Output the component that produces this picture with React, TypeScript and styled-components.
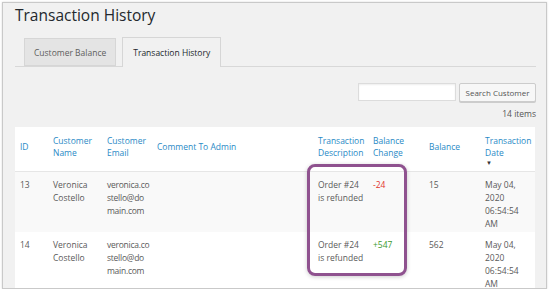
import styled, { createGlobalStyle } from 'styled-components';

const GlobalStyle = createGlobalStyle`
  body {
    margin: 0;
    background: #ffffff;
    font-family: "Open Sans", "Noto Sans", sans-serif;
  }
`;

interface Row {
  id: number;
  name: string;
  email: string;
  comment: string;
  description: string;
  change: number;
  balance: number;
  date: string[];
}

const rows: Row[] = [
  {
    id: 13,
    name: 'Veronica Costello',
    email: 'veronica.costello@domain.com',
    comment: '',
    description: 'Order #24 is refunded',
    change: -24,
    balance: 15,
    date: ['May 04,', '2020', '06:54:54', 'AM'],
  },
  {
    id: 14,
    name: 'Veronica Costello',
    email: 'veronica.costello@domain.com',
    comment: '',
    description: 'Order #24 is refunded',
    change: 547,
    balance: 562,
    date: ['May 04,', '2020', '06:54:54', 'AM'],
  },
];

// Style Components
const Frame = styled.div`
  position: relative;
  margin: 2px 3px 0 2px;
  height: 287px;
  box-sizing: border-box;
  border: 1px solid #c9c9c9;
  box-shadow: 0 0 2px rgba(0, 0, 0, 0.15);
  background: #f1f1f1;
  padding: 2px 10px 0 12px;
  overflow: hidden;
`;
const Title = styled.h1`
  margin: 0;
  font-size: 15.5px;
  line-height: 20px;
  font-weight: 400;
  color: #23282d;
`;
const TabBar = styled.div`
  display: flex;
  gap: 6px;
  margin-top: 13px;
  padding-left: 9px;
  height: 28px;
  border-bottom: 1px solid #d8d8d8;
`;
const Tab = styled.div<{ active?: boolean }>`
  display: flex;
  align-items: center;
  box-sizing: border-box;
  height: ${(p) => (p.active ? '30px' : '28px')};
  padding: 0 ${(p) => (p.active ? '10px' : '9px')};
  font-size: 8.5px;
  color: ${(p) => (p.active ? '#23282d' : '#5e5e5e')};
  background: ${(p) => (p.active ? '#f1f1f1' : '#e4e4e4')};
  border: 1px solid #d6d6d6;
  border-bottom: ${(p) => (p.active ? 'none' : '1px solid #d6d6d6')};
  margin-top: ${(p) => (p.active ? '-1px' : '0')};
`;
const Toolbar = styled.div`
  display: flex;
  justify-content: flex-end;
  gap: 3px;
  margin-top: 16px;
`;
const SearchInput = styled.div`
  width: 98px;
  height: 18px;
  box-sizing: border-box;
  background: #ffffff;
  border: 1px solid #dcdcdc;
  box-shadow: inset 0 1px 2px rgba(0, 0, 0, 0.07);
`;
const SearchButton = styled.div`
  display: flex;
  align-items: center;
  justify-content: center;
  width: 77px;
  height: 19px;
  box-sizing: border-box;
  font-size: 8px;
  color: #555;
  background: #f7f7f7;
  border: 1px solid #cccccc;
  border-radius: 2px;
  box-shadow: 0 1px 0 #cccccc;
`;
const Count = styled.div`
  text-align: right;
  font-size: 8.5px;
  line-height: 12px;
  color: #555;
  margin-top: 6px;
`;
const Table = styled.table`
  margin-top: 7px;
  width: 520px;
  table-layout: fixed;
  border-collapse: collapse;
  background: #ffffff;
  font-size: 8.5px;
  line-height: 13px;
`;
const HeadCell = styled.th`
  position: relative;
  height: 44px;
  box-sizing: border-box;
  padding: 0 5px 4px;
  text-align: left;
  vertical-align: middle;
  font-weight: 400;
  line-height: 12px;
  color: #2a8ac6;
  border-bottom: 1px solid #e6e6e6;
`;
const SortArrow = styled.span`
  position: absolute;
  left: 6px;
  bottom: 5px;
  font-size: 6px;
  line-height: 6px;
  color: #333;
`;
const BodyRow = styled.tr<{ striped?: boolean }>`
  background: ${(p) => (p.striped ? '#f9f9f9' : '#ffffff')};
`;
const Cell = styled.td<{ tone?: 'neg' | 'pos'; wrap?: 'all' | 'tight' }>`
  height: 60px;
  box-sizing: border-box;
  padding: 6px ${(p) => (p.wrap ? (p.wrap === 'all' ? '1px' : '2px') : '5px')} 2px 5px;
  vertical-align: top;
  word-break: ${(p) => (p.wrap === 'all' ? 'break-all' : 'normal')};
  letter-spacing: ${(p) => (p.wrap === 'all' ? '-0.25px' : '0')};
  color: ${(p) =>
    p.tone === 'neg' ? '#e2342d' : p.tone === 'pos' ? '#3b9a2f' : '#5a5a5a'};
`;
const Highlight = styled.div`
  position: absolute;
  left: 304px;
  top: 161px;
  width: 100px;
  height: 112px;
  box-sizing: border-box;
  border: 3px solid #8f528f;
  border-radius: 8px;
  box-shadow: 0 1px 4px rgba(0, 0, 0, 0.2);
  pointer-events: none;
`;

const columns = [33, 54, 50, 161, 55, 56, 56, 55];

function App() {
  return (
    <>
      <GlobalStyle />
      <Frame>
        <Title>Transaction History</Title>
        <TabBar>
          <Tab>Customer Balance</Tab>
          <Tab active>Transaction History</Tab>
        </TabBar>
        <Toolbar>
          <SearchInput />
          <SearchButton>Search Customer</SearchButton>
        </Toolbar>
        <Count>14 items</Count>
        <Table>
          <colgroup>
            {columns.map((w, i) => (
              <col key={i} style={{ width: w }} />
            ))}
          </colgroup>
          <thead>
            <tr>
              <HeadCell>ID</HeadCell>
              <HeadCell>Customer Name</HeadCell>
              <HeadCell>Customer Email</HeadCell>
              <HeadCell>Comment To Admin</HeadCell>
              <HeadCell>Transaction Description</HeadCell>
              <HeadCell>Balance Change</HeadCell>
              <HeadCell>Balance</HeadCell>
              <HeadCell>
                Transaction Date
                <SortArrow>▼</SortArrow>
              </HeadCell>
            </tr>
          </thead>
          <tbody>
            {rows.map((r, i) => (
              <BodyRow key={r.id} striped={i % 2 === 0}>
                <Cell>{r.id}</Cell>
                <Cell>{r.name}</Cell>
                <Cell wrap="all">{r.email}</Cell>
                <Cell>{r.comment}</Cell>
                <Cell wrap="tight">{r.description}</Cell>
                <Cell tone={r.change < 0 ? 'neg' : 'pos'}>
                  {r.change < 0 ? `-${Math.abs(r.change)}` : `+${r.change}`}
                </Cell>
                <Cell>{r.balance}</Cell>
                <Cell>
                  {r.date.map((d, j) => (
                    <div key={j}>{d}</div>
                  ))}
                </Cell>
              </BodyRow>
            ))}
          </tbody>
        </Table>
        <Highlight />
      </Frame>
    </>
  );
}

export default App;
